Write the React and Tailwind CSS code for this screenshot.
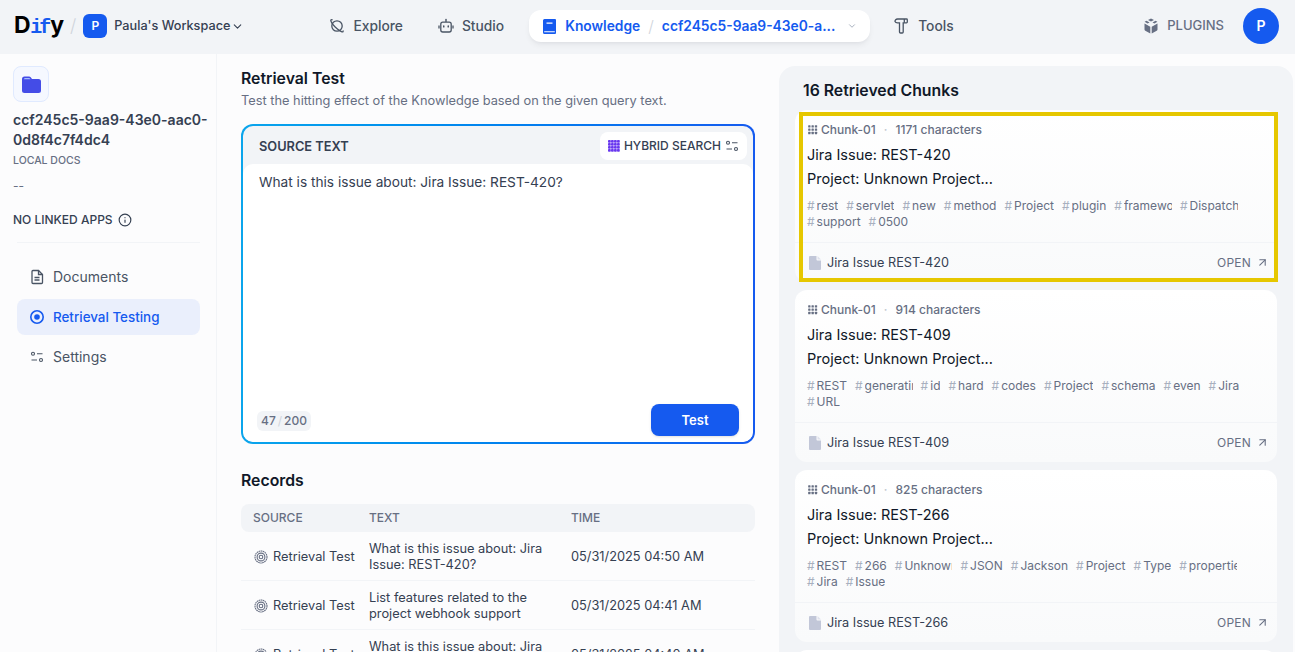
import React from "react";
import { ChevronDown, ArrowUpRight, Info } from "lucide-react";

const FONT = "font-['Inter','Noto_Sans',sans-serif]";

// ---- icons ----
function ExploreIcon() {
    return (
        <svg width="16" height="16" viewBox="0 0 16 16" fill="none" stroke="#495464" strokeWidth="1.3" className="shrink-0">
            <circle cx="8" cy="8" r="5.2" />
            <path d="M3.6 1.9C2.4 1.5 1.6 1.7 1.8 2.6c.3 1.5 2.2 4.1 4.4 6.4 2.300 2.300 5 4.300 6.700 4.800 1 .3 1.500-.1 1.100-1.300" />
        </svg>
    );
}

function StudioIcon() {
    return (
        <svg width="16" height="16" viewBox="0 0 16 16" fill="none" stroke="#495464" strokeWidth="1.3" className="shrink-0">
            <rect x="2.800" y="4.200" width="10.400" height="9.800" rx="2" />
            <path d="M8 4V2" />
            <circle cx="8" cy="1.600" r=".8" fill="#495464" stroke="none" />
            <path d="M1 7.500v3M15 7.500v3" />
            <rect x="5" y="7.200" width="1.500" height="2.400" rx=".7" fill="#495464" stroke="none" />
            <rect x="9.500" y="7.200" width="1.500" height="2.400" rx=".7" fill="#495464" stroke="none" />
        </svg>
    );
}

function BookIcon() {
    return (
        <svg width="14" height="15" viewBox="0 0 14 15" className="shrink-0">
            <path fillRule="evenodd" d="M1.500 0H12a1 1 0 0 1 1 1v13a1 1 0 0 1-1 1H1.500A1.500 1.500 0 0 1 0 13.500v-12A1.500 1.500 0 0 1 1.500 0ZM3.500 3.500v1.200h6V3.500ZM1.200 12.300v1h10.600v-1Z" fill="#155aef" />
        </svg>
    );
}

function ToolsIcon() {
    return (
        <svg width="16" height="16" viewBox="0 0 16 16" fill="none" stroke="#495464" strokeWidth="1.300" className="shrink-0">
            <path d="M1 3.500C1 2 2 1 3.500 1H12.500a.8.8 0 0 1 .8.8V4a.8.800 0 0 1-.8.800H9.200V14a1 1 0 0 1-1 1H6.500a1 1 0 0 1-1-1V4.800H3.500C2.500 4.800 1.500 4.600 1 3.500Z" />
            <path d="M10.300 1v3.800" />
        </svg>
    );
}

function PluginsIcon() {
    return (
        <svg width="16" height="16" viewBox="0 0 16 16" className="shrink-0" fill="#676f83">
            <path d="M8 .5 11 2 8 3.600 5 2Z" />
            <path d="M3.500 2.800 6.500 4.400 4.600 5.500 1.600 3.800Z" />
            <path d="M12.500 2.800 14.400 3.800 11.400 5.500 9.500 4.400Z" />
            <path d="M1.500 5.500 7.300 8.700V15.500L2.300 12.700a1.500 1.500 0 0 1-.8-1.300Z" />
            <path d="M14.500 5.500 8.700 8.700V15.500L13.700 12.700a1.500 1.500 0 0 0 .8-1.300Z" />
        </svg>
    );
}

function FolderIcon() {
    return (
        <svg width="19" height="17" viewBox="0 0 19 17">
            <path d="M2.500 0.500H7c.8 0 1.300.3 1.700.8L10 3h6.500A2.500 2.500 0 0 1 19 5.500v9a2.500 2.500 0 0 1-2.500 2.500h-14A2.500 2.500 0 0 1 0 14.500V3A2.500 2.500 0 0 1 2.500.500Z" fill="#444ce7" />
            <path d="M1.800 3.200c.3-.9.900-1.200 1.600-1.200H7c.6 0 1 .3 1.300.9l.2.300Z" fill="#a4bcfd" />
        </svg>
    );
}

function DocIcon() {
    return (
        <svg width="16" height="16" viewBox="0 0 16 16" fill="none" stroke="#495464" strokeWidth="1.300" className="shrink-0">
            <path d="M3 2.500A1 1 0 0 1 4 1.500h5.500L13.500 5.500v8a1 1 0 0 1-1 1H4a1 1 0 0 1-1-1Z" fill="none" />
            <path d="M9.500 1.500v4h4" />
            <path d="M5.500 8.500h5M5.500 11h5" />
        </svg>
    );
}

function TargetIcon({ color = "#155aef", size = 16 }) {
    return (
        <svg width={size} height={size} viewBox="0 0 16 16" fill="none" className="shrink-0">
            <circle cx="8" cy="8" r="6.200" stroke={color} strokeWidth="1.600" />
            <circle cx="8" cy="8" r="2.800" fill={color} />
        </svg>
    );
}

function RecordIcon() {
    return (
        <svg width="14" height="14" viewBox="0 0 14 14" fill="none" stroke="#676f83" className="shrink-0">
            <circle cx="7" cy="7" r="6" strokeWidth="1.100" strokeDasharray="1.600 .5" />
            <circle cx="7" cy="7" r="3.900" strokeWidth="1.100" />
            <circle cx="7" cy="7" r="1.800" strokeWidth="1.100" />
        </svg>
    );
}

function SlidersIcon({ color = "#495464", className = "" }) {
    return (
        <svg width="14" height="14" viewBox="0 0 14 14" fill="none" stroke={color} strokeWidth="1.100" className={`shrink-0 ${className}`}>
            <circle cx="3" cy="3.800" r="1.500" />
            <path d="M7 3.800h5.500M1.500 10h5.500" />
            <circle cx="11" cy="10" r="1.500" />
        </svg>
    );
}

function ChunkGridIcon() {
    const cells = [0, 1, 2];
    return (
        <svg width="10" height="10" viewBox="0 0 12 12" fill="#676f83" className="shrink-0">
            {cells.map(r => cells.map(c => (
                <rect key={`${r}-${c}`} x={c * 4 + .2} y={r * 4 + .2} width="2.800" height="2.800" rx=".6" />
            )))}
        </svg>
    );
}

function HybridIcon() {
    const cells = [0, 1, 2, 3];
    return (
        <svg width="12" height="12" viewBox="0 0 12 12" fill="#6938ef" className="shrink-0">
            {cells.map(r => cells.map(c => (
                <rect key={`${r}-${c}`} x={c * 3} y={r * 3} width="2.800" height="2.800" rx=".8" />
            )))}
        </svg>
    );
}

function FileIcon() {
    return (
        <svg width="12" height="14" viewBox="0 0 12 14" className="shrink-0">
            <path d="M1 0H7.500V3.500a1 1 0 0 0 1 1H12V13a1 1 0 0 1-1 1H1a1 1 0 0 1-1-1V1a1 1 0 0 1 1-1Z" fill="#c2c7d8" />
            <path d="M8.500 0 12 3.500H8.500Z" fill="#dfe2ec" />
        </svg>
    );
}

// ---- page parts ----
function NavItem({ icon, label, className = "" }) {
    return (
        <div className={`flex items-center gap-2 text-[13.800px] font-medium text-[#495464] ${className}`}>
            {icon}
            <span>{label}</span>
        </div>
    );
}

function Header() {
    return (
        <header className="flex h-[54px] shrink-0 items-center bg-[#f2f4f7] pb-[2px]">
            <div className="ml-[14px] flex w-[49px] shrink-0 items-baseline text-[23px] leading-none font-bold tracking-[-0.5px] text-black font-['Inter',sans-serif]">
                <span>D</span>
                <span className="font-['Liberation_Mono',monospace] text-[20px] font-bold tracking-[-3px] text-[#155aef]">if</span>
                <span className="ml-[2px]">y</span>
            </div>
            <span className="ml-[7px] text-lg font-light text-[#d0d5dc]">/</span>
            <div className="ml-[7px] flex h-6 w-6 shrink-0 items-center justify-center rounded-md bg-[#155aef] text-xs font-semibold text-white">P</div>
            <span className="ml-[7px] text-[12.700px] font-medium text-[#354052]">Paula's Workspace</span>
            <ChevronDown size={13} strokeWidth={2} className="ml-[1px] text-[#354052]" />
            <NavItem icon={<ExploreIcon />} label="Explore" className="ml-[85px]" />
            <NavItem icon={<StudioIcon />} label="Studio" className="ml-[35px]" />
            <div className="ml-[25px] flex h-8 w-[341px] shrink-0 items-center rounded-xl bg-white pl-[14px] pr-3 shadow-md shadow-[#1018280f]">
                <BookIcon />
                <span className="ml-[8px] text-[13.800px] font-semibold text-[#155aef]">Knowledge</span>
                <span className="ml-[8px] text-base font-light text-[#d0d5dc]">/</span>
                <span className="ml-[8px] text-[13.800px] font-semibold text-[#155aef]">ccf245c5-9aa9-43e0-a...</span>
                <ChevronDown size={10} className="ml-auto mr-[1px] text-[#98a2b2]" />
            </div>
            <NavItem icon={<ToolsIcon />} label="Tools" className="ml-[24px]" />
            <div className="ml-auto flex items-center gap-2 text-[13px] font-medium text-[#676f83]">
                <PluginsIcon />
                <span>PLUGINS</span>
            </div>
            <div className="ml-[19px] mr-4 flex h-9 w-9 shrink-0 items-center justify-center rounded-full bg-[#155aef] text-sm font-semibold text-white">P</div>
        </header>
    );
}

function SideLink({ icon, label, active }) {
    return (
        <div className={`flex h-9 items-center gap-2 rounded-lg pl-[12px] ${active ? "bg-[#eaeffc] text-[13.400px] font-medium text-[#155aef]" : "text-sm font-normal text-[#495464]"}`}>
            {icon}
            <span>{label}</span>
        </div>
    );
}

function Sidebar() {
    return (
        <aside className="w-[217px] shrink-0 border-r border-[#f2f4f7] pl-[13px] pr-4 pt-3">
            <div className="flex h-9 w-9 items-center justify-center rounded-lg border border-[#e0eaff] bg-[#f5f8ff]">
                <FolderIcon />
            </div>
            <div className="mt-[8px] mr-[-12px] text-sm leading-5 font-semibold text-[#354052]">ccf245c5-9aa9-43e0-aac0-0d8f4c7f4dc4</div>
            <div className="mt-[5px] text-[10.500px] leading-3 font-medium text-[#676f83]">LOCAL DOCS</div>
            <div className="mt-[11px] text-xs leading-4 text-[#676f83]">--</div>
            <div className="mt-[18px] flex items-center gap-[5px] text-xs leading-4 font-medium text-[#354052]">
                <span>NO LINKED APPS</span>
                <Info size={14} />
            </div>
            <div className="ml-[4px] mt-[14px] h-px bg-[#f2f4f7]" />
            <nav className="ml-[4px] mt-[16px] flex flex-col gap-1">
                <SideLink icon={<DocIcon />} label="Documents" />
                <SideLink icon={<TargetIcon />} label="Retrieval Testing" active />
                <SideLink icon={<SlidersIcon className="mx-px" />} label="Settings" />
            </nav>
        </aside>
    );
}

function SourceBox() {
    return (
        <div className="mt-[13px] h-[320px] rounded-xl bg-linear-to-r from-[#0ba5ec] to-[#155aef] p-[2px]">
            <div className="flex h-full flex-col overflow-hidden rounded-[10px] bg-[#f2f4f7]">
                <div className="flex h-[38px] shrink-0 items-center justify-between pl-4 pr-[6px] pt-[2px]">
                    <span className="mt-[2px] text-[12.800px] font-semibold text-[#354052]">SOURCE TEXT</span>
                    <div className="flex h-7 items-center gap-1 rounded-lg bg-white px-2 text-xs font-medium text-[#354052]">
                        <HybridIcon />
                        <span>HYBRID SEARCH</span>
                        <SlidersIcon />
                    </div>
                </div>
                <div className="flex min-h-0 flex-1 flex-col rounded-[10px] bg-white">
                    <div className="flex-1 px-4 pt-[8px] text-[13.700px] leading-5 text-[#354052]">What is this issue about: Jira Issue: REST-420?</div>
                    <div className="flex items-center justify-between pb-[6px] pl-[14px] pr-[14px]">
                        <div className="mt-[1px] flex h-5 items-center rounded-md bg-[#f2f4f7] px-1 text-xs font-medium text-[#676f83]">
                            47<span className="mx-[2px] font-normal text-[#d0d5dc]">/</span>200
                        </div>
                        <button className="h-8 w-[88px] rounded-lg bg-[#155aef] pt-px text-[13px] font-semibold text-white shadow-sm">Test</button>
                    </div>
                </div>
            </div>
        </div>
    );
}

const RECORDS = [
    { text: "What is this issue about: Jira Issue: REST-420?", time: "05/31/2025 04:50 AM" },
    { text: "List features related to the project webhook support", time: "05/31/2025 04:41 AM" },
    { text: "What is this issue about: Jira Issue: REST-420?", time: "05/31/2025 04:40 AM" },
];

function Records() {
    return (
        <div className="mt-[25px]">
            <h2 className="text-[15.800px] leading-6 font-semibold text-[#101828]">Records</h2>
            <div className="mt-[11px] grid h-7 grid-cols-[116px_202px_1fr] items-center rounded-lg bg-[#f2f4f7] pl-3 text-xs font-medium text-[#676f83]">
                <span>SOURCE</span>
                <span>TEXT</span>
                <span>TIME</span>
            </div>
            {RECORDS.map((r, i) => (
                <div key={i} className="grid h-[49px] grid-cols-[116px_202px_1fr] items-center border-b border-[#f2f4f7] pl-[13px] pt-[2px] text-[12.800px] text-[#354052]">
                    <div className="flex items-center gap-[5px]">
                        <RecordIcon />
                        <span className="whitespace-nowrap">Retrieval Test</span>
                    </div>
                    <div className="ml-[-1px] pr-3 leading-4">{r.text}</div>
                    <div className="ml-[-1px] whitespace-nowrap">{r.time}</div>
                </div>
            ))}
        </div>
    );
}

const CHUNKS = [
    {
        chars: "1171",
        title: "Jira Issue: REST-420",
        tags: ["rest", "servlet", "new", "method", "Project", "plugin", "framework", "Dispatcher", "support", "0500"],
        file: "Jira Issue REST-420",
    },
    {
        chars: "914",
        title: "Jira Issue: REST-409",
        tags: ["REST", "generating", "id", "hard", "codes", "Project", "schema", "even", "Jira", "URL"],
        file: "Jira Issue REST-409",
    },
    {
        chars: "825",
        title: "Jira Issue: REST-266",
        tags: ["REST", "266", "Unknown", "JSON", "Jackson", "Project", "Type", "properties", "Jira", "Issue"],
        file: "Jira Issue REST-266",
    },
];

function Tag({ label }) {
    return (
        <div className="flex shrink-0 items-center gap-[2px] text-xs leading-4 text-[#676f83]">
            <span className="text-[#a8b0bf]">#</span>
            <span className="max-w-12 overflow-hidden whitespace-nowrap">{label}</span>
        </div>
    );
}

function ChunkCard({ chunk }) {
    return (
        <div className="h-[172px] shrink-0 overflow-hidden rounded-xl bg-linear-to-b from-white to-[#f9fafb]">
            <div className="h-[133px] border-b border-[#f2f4f7] pl-3 pt-[12px]">
                <div className="flex items-center text-xs leading-4 font-medium text-[#676f83]">
                    <span className="ml-px"><ChunkGridIcon /></span>
                    <span className="ml-[3px]">Chunk-01</span>
                    <span className="mx-[8px] text-[#c2c7d0]">·</span>
                    <span>{chunk.chars} characters</span>
                </div>
                <div className="mt-[5px] text-[14.500px] leading-6 text-[#101828]">{chunk.title}</div>
                <div className="text-[14.500px] leading-6 text-[#101828]">Project: Unknown Project...</div>
                <div className="mt-[7px] flex w-[450px] flex-wrap gap-x-2">
                    {chunk.tags.map(label => <Tag key={label} label={label} />)}
                </div>
            </div>
            <div className="flex h-[39px] items-center pl-[14px] pr-[8px]">
                <FileIcon />
                <span className="ml-[6px] text-[12.700px] text-[#354052]">{chunk.file}</span>
                <span className="ml-auto text-xs font-normal tracking-[0.2px] text-[#676f83]">OPEN</span>
                <ArrowUpRight size={13} className="ml-[5px] text-[#676f83]" />
            </div>
        </div>
    );
}

function ChunksPanel() {
    return (
        <section className="relative ml-[24px] mt-3 flex w-[514px] shrink-0 flex-col gap-2 rounded-t-2xl bg-[#f2f4f7] pl-4 pr-4">
            <h2 className="mt-[13px] mb-[-1px] pl-2 text-[15.800px] leading-6 font-semibold text-[#101828]">16 Retrieved Chunks</h2>
            {CHUNKS.map(c => <ChunkCard key={c.chars} chunk={c} />)}
            <div className="h-20 shrink-0 rounded-xl bg-white" />
            {/* annotation drawn over the first result */}
            <div className="absolute left-[20px] top-[46px] h-[170px] w-[479px] border-4 border-[#e6c700]" />
        </section>
    );
}

export default function App() {
    return (
        <div className={`flex h-screen flex-col overflow-hidden bg-[#fcfcfd] ${FONT}`}>
            <Header />
            <div className="flex min-h-0 flex-1">
                <Sidebar />
                <main className="w-[538px] shrink-0 pl-6 pt-[13px]">
                    <h1 className="text-[15.800px] leading-6 font-semibold text-[#101828]">Retrieval Test</h1>
                    <p className="text-[12.800px] leading-[20px] text-[#676f83]">Test the hitting effect of the Knowledge based on the given query text.</p>
                    <SourceBox />
                    <Records />
                </main>
                <ChunksPanel />
            </div>
        </div>
    );
}
